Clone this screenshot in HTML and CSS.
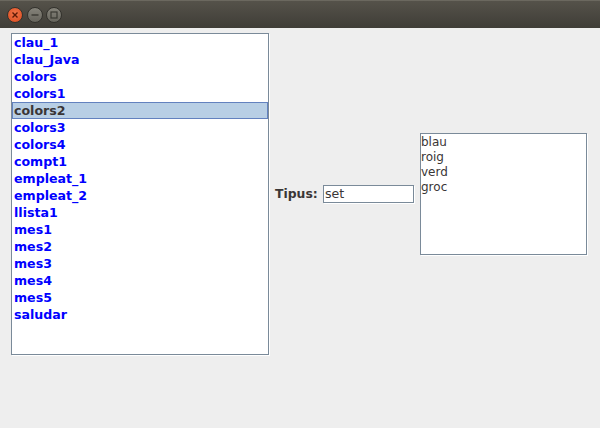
FILE: index.html
```html
<!DOCTYPE html>
<html lang="ca">
<head>
<meta charset="utf-8">
<title>Tipus</title>
<link rel="stylesheet" href="styles.css">
</head>
<body>
<header class="titlebar">
  <span class="btn btn-close">
    <svg width="8" height="8" viewBox="0 0 8 8"><path d="M1.5 1.5l5 5M6.5 1.5l-5 5" stroke="#5c1a06" stroke-width="1.4" fill="none"/></svg>
  </span>
  <span class="btn btn-min">
    <svg width="8" height="8" viewBox="0 0 8 8"><path d="M0.5 4h7" stroke="#3a3933" stroke-width="1.4" fill="none"/></svg>
  </span>
  <span class="btn btn-max">
    <svg width="8" height="8" viewBox="0 0 8 8"><rect x="1" y="1" width="6" height="6" stroke="#3a3933" stroke-width="1.2" fill="none"/></svg>
  </span>
</header>
<main class="content">
  <ul class="list">
    <li>clau_1</li>
    <li>clau_Java</li>
    <li>colors</li>
    <li>colors1</li>
    <li class="selected">colors2</li>
    <li>colors3</li>
    <li>colors4</li>
    <li>compt1</li>
    <li>empleat_1</li>
    <li>empleat_2</li>
    <li>llista1</li>
    <li>mes1</li>
    <li>mes2</li>
    <li>mes3</li>
    <li>mes4</li>
    <li>mes5</li>
    <li>saludar</li>
  </ul>
  <div class="detail">
    <label class="type-label">Tipus:</label>
    <div class="type-field">set</div>
    <div class="values">
      <div>blau</div>
      <div>roig</div>
      <div>verd</div>
      <div>groc</div>
    </div>
  </div>
</main>
</body>
</html>
```
FILE: styles.css
```css
* { box-sizing: border-box; }
html, body { margin: 0; padding: 0; }
body {
  width: 600px;
  height: 428px;
  overflow: hidden;
  background: #eeeeee;
  font-family: "DejaVu Sans", sans-serif;
  font-size: 12px;
  color: #3a3636;
}
.titlebar {
  height: 28px;
  display: flex;
  align-items: center;
  gap: 3.5px;
  padding: 0 0 0 7px;
  background: linear-gradient(#55524a, #3f3d37);
  border-top: 1px solid #6b685f;
}
.btn {
  width: 16px;
  height: 16px;
  border-radius: 50%;
  display: flex;
  align-items: center;
  justify-content: center;
  border: 1px solid #33322d;
}
.btn-close { background: radial-gradient(circle at 50% 40%, #f2764a, #d8481c); }
.btn-min, .btn-max { background: linear-gradient(#85837a, #66645c); }
.content {
  display: flex;
  align-items: flex-start;
  padding: 5px 0 0 11px;
}
.list {
  list-style: none;
  margin: 0;
  padding: 0;
  width: 258px;
  height: 322px;
  background: #ffffff;
  border: 1px solid #7a8a99;
  box-shadow: 1px 1px 0 #ffffff;
  font-size: 12.6px;
  font-weight: bold;
  color: #0000ff;
}
.list li {
  height: 17px;
  line-height: 18px;
  padding-left: 2px;
}
.list .selected {
  background: #b8cfe5;
  color: #3a3636;
  border: 1px solid #6382bf;
  padding-left: 1px;
  line-height: 15px;
}
.detail {
  display: flex;
  align-items: center;
  height: 121px;
  margin-top: 100px;
  padding-left: 6px;
}
.type-label {
  font-size: 12.4px;
  font-weight: bold;
  width: 48px;
}
.type-field {
  width: 91px;
  height: 18px;
  margin-top: 1px;
  padding-left: 1px;
  line-height: 16px;
  font-size: 12.6px;
  background: #ffffff;
  border: 1px solid #7a8a99;
  box-shadow: 1px 1px 0 #ffffff;
}
.values {
  width: 167px;
  height: 122px;
  margin-left: 6px;
  padding: 1px 0 0;
  background: #ffffff;
  border: 1px solid #7a8a99;
  box-shadow: 1px 1px 0 #ffffff;
  font-size: 12px;
  line-height: 15px;
}
```
